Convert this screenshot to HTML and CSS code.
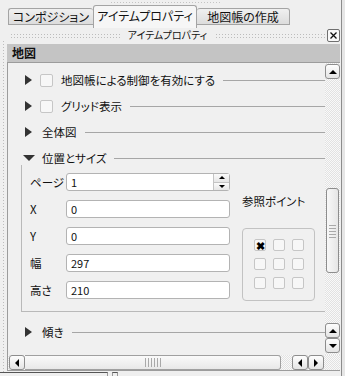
FILE: index.html
```html
<!DOCTYPE html>
<html lang="ja">
<head>
  <meta charset="UTF-8" />
  <title>アイテムプロパティ</title>
  <link rel="stylesheet" href="styles.css">
</head>
<body>
<div class="window">
  <div class="main">
    <div class="top">
      <div class="top-grip"></div>
      <div class="tabs">
        <div class="tab tab-comp">コンポジション</div>
        <div class="tab tab-item active">アイテムプロパティ</div>
        <div class="tab tab-atlas">地図帳の作成</div>
      </div>
    </div>

    <div class="dock">
      <div class="grip"></div>
      <div class="panel">
        <div class="dock-title">
          <span class="dots"></span>
          <span class="dock-name">アイテムプロパティ</span>
          <span class="dots"></span>
          <span class="close-btn">
            <svg width="9" height="9" viewBox="0 0 9 9"><path d="M1.5 1.5L7.5 7.5M7.5 1.5L1.5 7.5" stroke="#111" stroke-width="1.3"/></svg>
          </span>
        </div>
        <div class="section-head">地図</div>

        <div class="scroll">
          <div class="scroll-main">
            <div class="content">
              <div class="row">
                <span class="tri-right"></span>
                <span class="check"></span>
                <span class="row-text">地図帳による制御を有効にする</span>
                <span class="rule"></span>
              </div>
              <div class="row">
                <span class="tri-right"></span>
                <span class="check"></span>
                <span class="row-text">グリッド表示</span>
                <span class="rule"></span>
              </div>
              <div class="row">
                <span class="tri-right"></span>
                <span class="row-text plain">全体図</span>
                <span class="rule"></span>
              </div>

              <div class="group-head">
                <span class="tri-down"></span>
                <span class="row-text">位置とサイズ</span>
                <span class="rule"></span>
              </div>
              <div class="group-body">
                <div class="fields">
                  <label>ページ</label>
                  <div class="input spin">
                    <span>1</span>
                    <span class="spin-btns">
                      <span class="spin-up"><i class="arr-up"></i></span>
                      <span class="spin-down"><i class="arr-down"></i></span>
                    </span>
                  </div>
                  <label>X</label>
                  <div class="input">0</div>
                  <label>Y</label>
                  <div class="input">0</div>
                  <label>幅</label>
                  <div class="input">297</div>
                  <label>高さ</label>
                  <div class="input">210</div>
                </div>
                <div class="refpoint">
                  <div class="ref-label">参照ポイント</div>
                  <div class="ref-box">
                    <span class="ref-cell checked">✖</span>
                    <span class="ref-cell"></span>
                    <span class="ref-cell"></span>
                    <span class="ref-cell"></span>
                    <span class="ref-cell"></span>
                    <span class="ref-cell"></span>
                    <span class="ref-cell"></span>
                    <span class="ref-cell"></span>
                    <span class="ref-cell"></span>
                  </div>
                </div>
              </div>

              <div class="row tilt">
                <span class="tri-right"></span>
                <span class="row-text plain">傾き</span>
                <span class="rule"></span>
              </div>
            </div>

            <div class="vscroll">
              <span class="sbtn v-top"><i class="arr-up"></i></span>
              <div class="vtrack">
                <div class="vthumb"><span class="thumb-grip"></span></div>
              </div>
              <span class="sbtn"><i class="arr-up"></i></span>
              <span class="sbtn v-last"><i class="arr-down"></i></span>
            </div>
          </div>

          <div class="hscroll">
            <div class="hbar">
              <span class="sbtn h-first"><i class="arr-left"></i></span>
              <div class="hthumb"><span class="thumb-grip h"></span></div>
              <div class="htrack"></div>
              <span class="sbtn"><i class="arr-left"></i></span>
              <span class="sbtn"><i class="arr-right"></i></span>
            </div>
            <div class="corner"></div>
          </div>
        </div>
      </div>
    </div>

    <div class="bottom">
      <span class="bottom-tab"></span>
      <span class="bottom-tab small"></span>
    </div>
  </div>
  <div class="edge"></div>
</div>
</body>
</html>
```

FILE: styles.css
```css
* {
  box-sizing: border-box;
  margin: 0;
  padding: 0;
}

body {
  font-family: "Noto Sans CJK JP", "Noto Sans", sans-serif;
  font-feature-settings: "palt" 1;
  font-size: 11px;
  color: #111;
  background: #efefef;
}

.window {
  width: 345px;
  height: 376px;
  overflow: hidden;
  display: flex;
  background: #efefef;
}

.main {
  width: 342px;
  border-right: 1px solid #8c8c8c;
  display: flex;
  flex-direction: column;
}

.edge {
  flex: 1;
  background: #e6e6e6;
}

/* tabs */
.top {
  height: 28px;
  display: flex;
  flex-direction: column;
}

.top-grip {
  width: 110px;
  height: 3px;
  margin: 1px auto 0 110px;
  background: radial-gradient(circle, #c4c4c4 0.7px, transparent 0.8px) 0 0/3px 3px;
}

.tabs {
  flex: 1;
  display: flex;
  align-items: flex-end;
  padding-left: 8px;
}

.tab {
  height: 17px;
  margin-bottom: 3px;
  border: 1px solid #a4a4a4;
  border-radius: 3px 3px 0 0;
  background: linear-gradient(#f0f0f0, #dcdcdc);
  font-size: 12px;
  line-height: 15px;
  text-align: center;
}

.tab-comp { width: 85px; border-right: none; }
.tab-item { width: 104px; }
.tab-atlas { width: 93px; border-left: none; }

.tab.active {
  height: 23px;
  margin-bottom: 0;
  border-bottom: none;
  background: #f6f6f6;
  line-height: 19px;
}

/* dock */
.dock {
  height: 344px;
  display: flex;
}

.grip {
  width: 3px;
  margin: 12px 2px 0 2px;
  background: radial-gradient(circle, #bdbdbd 0.7px, transparent 0.8px) 0 0/3px 3px;
}

.panel {
  width: 333px;
  display: flex;
  flex-direction: column;
}

.dock-title {
  height: 14px;
  display: flex;
  align-items: center;
  padding-left: 3px;
}

.dots {
  flex: 1;
  height: 5px;
  background: radial-gradient(circle, #bcbcbc 0.8px, transparent 0.9px) 0 0/3px 3px;
}

.dock-name {
  font-size: 10px;
  line-height: 12px;
  padding: 0 8px;
}

.close-btn {
  width: 13px;
  height: 13px;
  margin-left: 2px;
  border: 1px solid #6f6f6f;
  border-radius: 2px;
  background: #f8f8f8;
  display: flex;
  align-items: center;
  justify-content: center;
}

.section-head {
  margin-top: 2px;
  height: 18px;
  background: #c4c4c4;
  padding-left: 5px;
  font-size: 12px;
  font-weight: bold;
  line-height: 18px;
}

.scroll {
  height: 309px;
  border: 1px solid #9c9c9c;
  border-right: none;
  display: flex;
  flex-direction: column;
}

.scroll-main {
  height: 292px;
  display: flex;
}

.content {
  flex: 1;
  padding-top: 4px;
  background: #f0f0f0;
}

.row {
  height: 26px;
  display: flex;
  align-items: center;
  padding-left: 17px;
}

.tri-right {
  width: 0;
  height: 0;
  border-left: 7px solid #333;
  border-top: 5px solid transparent;
  border-bottom: 5px solid transparent;
  margin-right: 8px;
}

.tri-down {
  width: 0;
  height: 0;
  border-top: 6px solid #333;
  border-left: 6px solid transparent;
  border-right: 6px solid transparent;
  margin-right: 7px;
}

.check {
  width: 13px;
  height: 13px;
  border: 1px solid #c6c6c6;
  border-radius: 2px;
  background: #f7f7f7;
  margin-right: 8px;
}

.row-text {
  font-size: 11.5px;
  line-height: 14px;
  white-space: nowrap;
}

.row-text.plain {
  margin-left: 2px;
}

.rule {
  flex: 1;
  height: 1px;
  background: #a6a6a6;
  margin-left: 8px;
}

/* position & size group */
.group-head {
  margin-top: 6px;
  height: 14px;
  display: flex;
  align-items: center;
  padding-left: 15px;
}

.group-body {
  margin-left: 13px;
  border-left: 1px solid #b9b9b9;
  border-bottom: 1px solid #b9b9b9;
  padding: 8px 0 10px 8px;
  display: flex;
}

.fields {
  display: grid;
  grid-template-columns: 36px 164px;
  grid-auto-rows: 18px;
  row-gap: 9px;
  align-items: center;
}

.fields label {
  font-size: 11.5px;
  line-height: 14px;
}

.input {
  height: 18px;
  border: 1px solid #b3b3b3;
  border-radius: 3px;
  background: #fff;
  padding-left: 4px;
  font-size: 11px;
  line-height: 16px;
  display: flex;
  align-items: center;
}

.input.spin {
  justify-content: space-between;
  padding-right: 0;
}

.spin-btns {
  width: 16px;
  height: 16px;
  display: flex;
  flex-direction: column;
  border-left: 1px solid #c4c4c4;
}

.spin-up, .spin-down {
  flex: 1;
  display: flex;
  align-items: center;
  justify-content: center;
  background: linear-gradient(#fbfbfb, #e6e6e6);
}

.spin-up { border-bottom: 1px solid #c4c4c4; }

.refpoint {
  margin-left: 12px;
  width: 73px;
}

.ref-label {
  margin-top: 21px;
  font-size: 11.5px;
  line-height: 14px;
  white-space: nowrap;
}

.ref-box {
  margin-top: 20px;
  width: 73px;
  height: 73px;
  border: 1px solid #c2c2c2;
  border-radius: 4px;
  padding: 10px 0 0 11px;
  display: grid;
  grid-template-columns: repeat(3, 12px);
  grid-auto-rows: 12px;
  gap: 7px;
}

.ref-cell {
  border: 1px solid #c6c6c6;
  border-radius: 2px;
  background: #f7f7f7;
  font-size: 11px;
  line-height: 10px;
  text-align: center;
}

.ref-cell.checked {
  color: #000;
  font-weight: bold;
}

.row.tilt {
  margin-top: 7px;
}

/* scroll bars */
.vscroll {
  width: 15px;
  display: flex;
  flex-direction: column;
  background: repeating-conic-gradient(#e2e2e2 0 25%, #f9f9f9 0 50%) 0 0/2px 2px;
}

.sbtn {
  width: 15px;
  height: 15px;
  border: 1px solid #8d8d8d;
  border-radius: 3px;
  background: linear-gradient(#fdfdfd, #e4e4e4);
  display: flex;
  align-items: center;
  justify-content: center;
}

.v-top { margin-top: 1px; }
.v-last { margin-bottom: 2px; }

.vtrack {
  flex: 1;
}

.vthumb {
  width: 13px;
  height: 85px;
  margin: 109px 0 0 1px;
  border: 1px solid #8d8d8d;
  border-radius: 3px;
  background: linear-gradient(90deg, #f8f8f8, #e6e6e6);
  display: flex;
  align-items: center;
  justify-content: center;
}

.thumb-grip {
  width: 7px;
  height: 14px;
  background: radial-gradient(circle, #a9a9a9 0.6px, transparent 0.7px) 0 0/2px 3px;
}

.thumb-grip.h {
  width: 18px;
  height: 9px;
  background-size: 3px 2px;
}

.hscroll {
  height: 15px;
  display: flex;
}

.hbar {
  flex: 1;
  display: flex;
  padding-left: 1px;
  background: repeating-conic-gradient(#e2e2e2 0 25%, #f9f9f9 0 50%) 0 0/2px 2px;
}

.h-first { width: 16px; }

.hthumb {
  width: 256px;
  height: 15px;
  border: 1px solid #a0a0a0;
  border-left: none;
  border-radius: 0 3px 3px 0;
  background: linear-gradient(#fafafa, #e8e8e8);
  display: flex;
  align-items: center;
  justify-content: center;
}

.htrack {
  width: 11px;
}

.hbar .sbtn { width: 16px; }

.corner {
  width: 17px;
  background: repeating-conic-gradient(#e2e2e2 0 25%, #f9f9f9 0 50%) 0 0/2px 2px;
}

.arr-up, .arr-down, .arr-left, .arr-right {
  width: 0;
  height: 0;
  display: block;
}

.arr-up {
  border-bottom: 4px solid #000;
  border-left: 4px solid transparent;
  border-right: 4px solid transparent;
}

.arr-down {
  border-top: 4px solid #000;
  border-left: 4px solid transparent;
  border-right: 4px solid transparent;
}

.spin-up .arr-up, .spin-down .arr-down {
  border-width: 3px;
}

.spin-up .arr-up { border-top: none; }
.spin-down .arr-down { border-bottom: none; }

.arr-left {
  border-right: 4px solid #000;
  border-top: 4px solid transparent;
  border-bottom: 4px solid transparent;
}

.arr-right {
  border-left: 4px solid #000;
  border-top: 4px solid transparent;
  border-bottom: 4px solid transparent;
}

.bottom {
  flex: 1;
  display: flex;
  gap: 4px;
}

.bottom-tab {
  width: 108px;
  border-top: 1px solid #555;
  border-right: 1px solid #999;
}

.bottom-tab.small {
  width: 6px;
  border-left: 1px solid #999;
}
```
